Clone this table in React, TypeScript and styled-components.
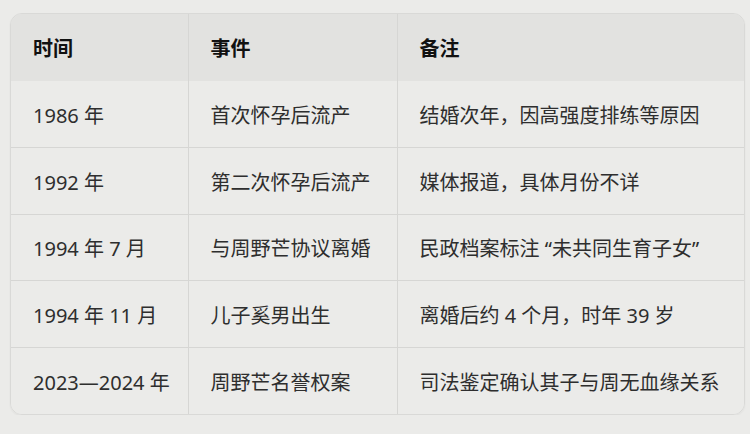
import styled, { createGlobalStyle } from "styled-components";

const GlobalStyle = createGlobalStyle`
  html, body {
    margin: 0;
    padding: 0;
    background: #ebebe9;
  }
`;

const Page = styled.div`
  padding: 13px 5px 0 10px;
  font-family: "Noto Sans", "Noto Sans CJK SC", sans-serif;
`;

const TableWrap = styled.div`
  width: 735px;
  border: 1px solid #d9d9d7;
  border-radius: 12px;
  overflow: hidden;
  box-shadow: 0 1px 2px rgba(0, 0, 0, 0.05);
  box-sizing: border-box;
`;

const Table = styled.table`
  width: 100%;
  border-collapse: collapse;
  table-layout: fixed;
`;

const HeadCell = styled.th<{ $w: number }>`
  box-sizing: border-box;
  width: ${(p) => p.$w}px;
  height: 67px;
  padding: 0 22px 1px;
  text-align: left;
  font-size: 20px;
  font-weight: 700;
  color: #111;
  background: #e2e2e0;
  border-left: 1px solid #d6d6d4;
  &:first-child {
    border-left: none;
  }
`;

const Row = styled.tr`
  background: #ebebe9;
  & + & td {
    border-top: 1px solid #d6d6d4;
  }
`;

const Cell = styled.td`
  box-sizing: border-box;
  height: 66.5px;
  padding: 1px 22px 0;
  font-size: 20px;
  color: #2e2e2e;
  border-left: 1px solid #d6d6d4;
  white-space: nowrap;
  &:first-child {
    border-left: none;
  }
`;

const rows = [
  ["1986 年", "首次怀孕后流产", "结婚次年，因高强度排练等原因"],
  ["1992 年", "第二次怀孕后流产", "媒体报道，具体月份不详"],
  ["1994 年 7 月", "与周野芒协议离婚", "民政档案标注 “未共同生育子女”"],
  ["1994 年 11 月", "儿子奚男出生", "离婚后约 4 个月，时年 39 岁"],
  ["2023—2024 年", "周野芒名誉权案", "司法鉴定确认其子与周无血缘关系"],
];

export default function App() {
  return (
    <Page>
      <GlobalStyle />
      <TableWrap>
        <Table>
          <thead>
            <tr>
              <HeadCell $w={177}>时间</HeadCell>
              <HeadCell $w={209}>事件</HeadCell>
              <HeadCell $w={347}>备注</HeadCell>
            </tr>
          </thead>
          <tbody>
            {rows.map((r) => (
              <Row key={r[0]}>
                {r.map((c) => (
                  <Cell key={c}>{c}</Cell>
                ))}
              </Row>
            ))}
          </tbody>
        </Table>
      </TableWrap>
    </Page>
  );
}
